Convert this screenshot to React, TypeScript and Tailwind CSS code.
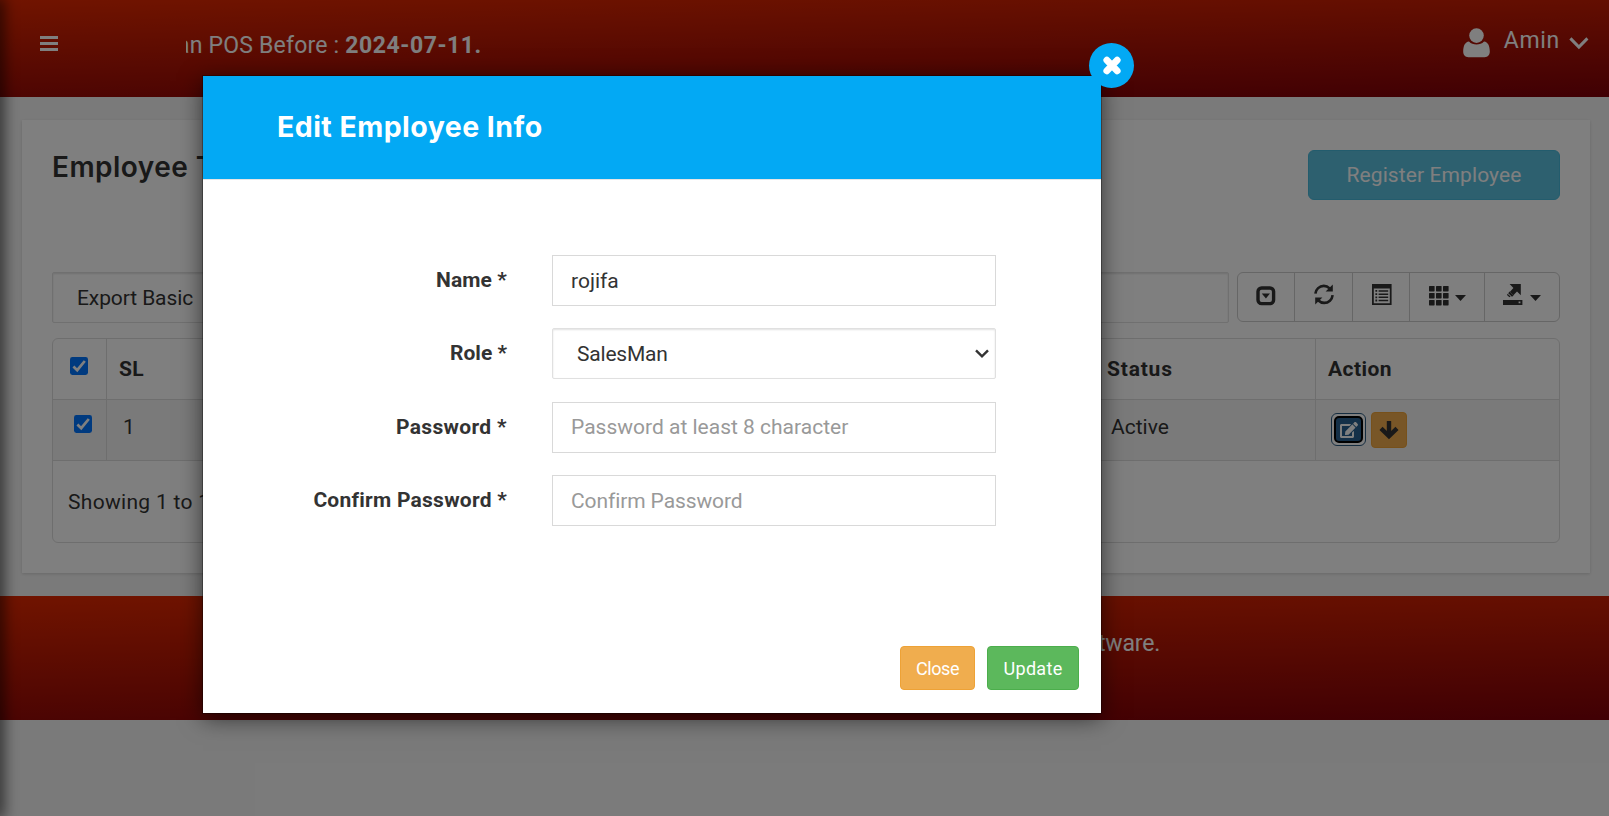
import type { ReactNode } from "react";
import { FaEdit } from "react-icons/fa";

const BRAND = "bg-[linear-gradient(178.6deg,#e22800_0%,#800008_100%)]";

function UserIcon() {
  return (
    <svg width="27" height="30" viewBox="0 0 27 30" fill="currentColor">
      <circle cx="13.5" cy="7.6" r="7.3" />
      <path d="M6 13.4C8 15.6 10.6 16.4 13.5 16.4S19 15.6 21 13.4C25 14 26.8 17.6 26.8 23.6 26.8 27 25 29.2 21.6 29.2H5.4C2 29.2.2 27 .2 23.6.2 17.6 2 14 6 13.4Z" />
    </svg>
  );
}

function PaginationIcon() {
  return (
    <svg width="20" height="20" viewBox="0 0 20 20">
      <rect x="2" y="2" width="15.6" height="15.6" rx="3.6" fill="none" stroke="currentColor" strokeWidth="3.4" />
      <path d="M5.8 7.4h8.2L9.9 12.4Z" fill="currentColor" />
    </svg>
  );
}

function RefreshIcon() {
  return (
    <svg width="20" height="21" viewBox="0 0 20 21" fill="none" stroke="currentColor" strokeWidth="2.6">
      <path d="M1.4 9.6C1.8 5.2 5.4 1.9 9.8 1.9c2.4 0 4.3.9 5.8 2.4" />
      <path d="M18.6 11.2c-.4 4.4-4 7.7-8.4 7.7-2.4 0-4.3-.9-5.8-2.4" />
      <path d="M18.8.4v7.2h-7.2Z" fill="currentColor" stroke="none" />
      <path d="M1.2 20.6v-7.2h7.2Z" fill="currentColor" stroke="none" />
    </svg>
  );
}

function ListIcon() {
  return (
    <svg width="20" height="21" viewBox="0 0 20 21" fill="currentColor">
      <path fillRule="evenodd" d="M0 0h19.6v21H0ZM1.8 4.6v14.6h16V4.6Z" />
      <path d="M3.4 6h1.8v1.8H3.4zM6.6 6.2h9.6v1.5H6.6zM3.4 9.2h1.8V11H3.4zM6.6 9.4h9.6v1.5H6.6zM3.4 12.4h1.8v1.8H3.4zM6.6 12.6h9.6v1.5H6.6zM3.4 15.6h1.8v1.8H3.4zM6.6 15.8h9.6v1.5H6.6z" />
    </svg>
  );
}

function GridIcon() {
  return (
    <svg width="20" height="20" viewBox="0 0 20 20" fill="currentColor">
      {[0, 7, 14].map((y) => [0, 7, 14].map((x) => <rect key={`${x}-${y}`} x={x} y={y} width="5.6" height="5.4" rx=".6" />))}
    </svg>
  );
}

function ExportIcon() {
  return (
    <svg width="20" height="21" viewBox="0 0 20 21" fill="currentColor">
      <path d="M6.6 0h11.2v11.2L14 7.6 10.4 11.2 7 7.8 10.4 3.9Z" />
      <path d="M6.6 7.6 10.6 11.4 9 12.8 5.2 9.2ZM4.6 9.8 7.6 12.6 6.4 13.2 4 11Z" />
      <path fillRule="evenodd" d="M0 16h19.4v5H0ZM15.6 17.6v1.6h1.8v-1.6Z" />
    </svg>
  );
}

function Caret() {
  return (
    <svg width="11" height="6" viewBox="0 0 11 6" fill="currentColor">
      <path d="M0 0h11L5.5 6Z" />
    </svg>
  );
}

function CheckedBox() {
  return (
    <svg width="18" height="18" viewBox="0 0 18 18">
      <rect width="18" height="18" rx="2.4" fill="#0075ff" />
      <path d="M3.4 9.6 7.2 13.2 14.8 4" fill="none" stroke="#fff" strokeWidth="2.7" />
    </svg>
  );
}

function ToolButton({ className, children }: { className: string; children: ReactNode }) {
  return <button className={`flex justify-center border-r border-[#ccc] last:border-r-0 ${className}`}>{children}</button>;
}

function Field({ label, tracking, children }: { label: string; tracking: string; children: ReactNode }) {
  return (
    <div className="flex h-[51px]">
      <label className={`w-[304px] text-right leading-[51px] font-bold ${tracking}`}>{label}</label>
      <div className="ml-[45px] w-[444px]">{children}</div>
    </div>
  );
}

const inputClass =
  "block h-[51px] w-full border border-[#d9d9d9] bg-white pl-[18px] text-[21px] text-[#333] outline-none placeholder:text-[#999]";

export default function App() {
  return (
    <div className="relative h-[816px] w-[1609px] overflow-hidden bg-[#f5f5f5] font-['Roboto',sans-serif] text-[21px] text-[#333]">
      <header className={`flex h-[97px] text-white ${BRAND}`}>
        <button className="mt-9 ml-10 flex h-[15px] w-[18px] flex-col justify-between">
          <span className="h-[3px] w-full bg-white" />
          <span className="h-[3px] w-full bg-white" />
          <span className="h-[3px] w-full bg-white" />
        </button>
        <div className="mt-[30px] ml-[128px] flex h-8 w-[900px] overflow-hidden text-[23px] leading-8 whitespace-nowrap">
          <span className="-ml-[9px] tracking-[0.2px]">an POS Before :</span>
          <span className="ml-[6px] font-bold tracking-[0.55px]">2024-07-11.</span>
        </div>
        <div className="mr-5 ml-auto flex">
          <span className="mt-[27.5px]">
            <UserIcon />
          </span>
          <span className="mt-[25px] ml-[14px] text-[23px] leading-8 tracking-[0.7px]">Amin</span>
          <svg className="mt-9 ml-[9px]" width="20" height="14" viewBox="0 0 20 14" fill="none" stroke="currentColor" strokeWidth="3">
            <path d="M1.4 2.4 9.9 11 18.4 2.4" />
          </svg>
        </div>
      </header>

      <main className="pt-[23px] pr-[19px] pb-[23px] pl-[22px]">
        <section className="h-[453px] bg-white px-[30px] pt-[30px] shadow-[0_1px_3px_rgba(0,0,0,0.15)]">
          <div className="flex h-[122px] justify-between">
            <h1 className="mt-[1px] h-8 font-['Inter',sans-serif] text-[28px] leading-8 font-semibold tracking-[0.45px]">Employee T</h1>
            <button className="h-[50px] w-[252px] rounded-[6px] border border-[#46b8da] bg-[#5bc0de] pt-[2px] tracking-[0.1px] text-white">Register Employee</button>
          </div>

          <div className="flex">
            <div className="h-[51px] w-[1177px] rounded-[2px] border border-[#e0e0e0] pl-6 leading-[51px] tracking-[-0.1px] shadow-[inset_0_1px_2px_rgba(0,0,0,0.12)]">
              Export Basic
            </div>
            <div className="ml-2 flex h-[50px] w-[323px] rounded-[6px] border border-[#ccc]">
              <ToolButton className="w-[57px] pt-[13px]"><PaginationIcon /></ToolButton>
              <ToolButton className="w-[58px] pt-[11px]"><RefreshIcon /></ToolButton>
              <ToolButton className="w-[57px] pt-[11px] pl-[2px]"><ListIcon /></ToolButton>
              <ToolButton className="w-[75px] gap-[6px] pt-[13px]">
                <GridIcon />
                <span className="mt-[9px]"><Caret /></span>
              </ToolButton>
              <ToolButton className="w-[74px] gap-[7px] pt-[11px]">
                <ExportIcon />
                <span className="mt-[11px]"><Caret /></span>
              </ToolButton>
            </div>
          </div>

          <div className="mt-[15px] h-[205px] overflow-hidden rounded-[6px] border border-[#ddd]">
            <div className="flex h-[61px] border-b border-[#ddd] leading-[61px] font-bold">
              <div className="w-[54px] border-r border-[#ddd] pt-[17.5px] pl-[17px]"><CheckedBox /></div>
              <div className="w-[988px] pl-3 tracking-[0.4px]">SL</div>
              <div className="w-[221px] border-r border-[#ddd] pl-3 tracking-[0.8px]">Status</div>
              <div className="pl-[12px] tracking-[0.45px]">Action</div>
            </div>
            <div className="flex h-[61px] border-b border-[#ddd] bg-[#f5f5f5] leading-[55px]">
              <div className="w-[54px] border-r border-[#ddd] pt-[14.5px] pl-[21px]"><CheckedBox /></div>
              <div className="w-[988px] pl-4">1</div>
              <div className="w-[221px] border-r border-[#ddd] pl-4">Active</div>
              <div className="flex items-start pl-[15px]">
                <button className="mt-[13px] flex h-[33px] w-[35px] rounded-[6px] border border-[#2b5a80] bg-white p-[2px]">
                  <span className="flex h-full w-full items-center justify-center rounded-[5px] border-[2.5px] border-black bg-[#286090] pl-[1px] text-white">
                    <FaEdit size={18} />
                  </span>
                </button>
                <button className="mt-[12px] ml-[5px] flex h-9 w-9 items-center justify-center rounded-[4px] border border-[#eea236] bg-[#f0ad4e] text-[#333]">
                  <svg width="20" height="19" viewBox="0 0 20 19" fill="none" stroke="currentColor" strokeWidth="4.4">
                    <path d="M10 .8V14" strokeLinecap="round" />
                    <path d="M2 7.4 10 15.2 18 7.4" />
                  </svg>
                </button>
              </div>
            </div>
            <div className="h-[82px] pl-[15px] leading-[82px] tracking-[0.3px] whitespace-nowrap">Showing 1 to 1</div>
          </div>
        </section>
      </main>

      <footer className={`h-[124px] pt-8 text-white ${BRAND}`}>
        <p className="w-[1160px] text-right text-[23px] leading-8 tracking-[-0.2px]">tware.</p>
      </footer>

      <div className="absolute top-0 -left-2 h-full w-2 shadow-[0_0_15px_3px_rgba(0,0,0,0.7)]" />
      <div className="absolute inset-0 bg-black/50" />

      <div role="dialog" className="absolute top-[76px] left-[203px] h-[637px] w-[898px] bg-white shadow-[0_5px_22px_rgba(0,0,0,0.6),0_0_0_1px_rgba(0,0,0,0.3)]">
        <div className="h-[104px] border-b border-[#e5e5e5] bg-[#03a9f4] pl-[74px]">
          <h2 className="font-['Inter',sans-serif] text-[28.5px] leading-[102px] font-bold tracking-[0.45px] text-white">Edit Employee Info</h2>
        </div>
        <button className="absolute -top-[33px] left-[886px] flex h-[45px] w-[45px] items-center justify-center rounded-full bg-[#03a9f4] text-white">
          <svg width="18" height="19" viewBox="0 0 18 19" fill="none" stroke="currentColor" strokeWidth="6.8" strokeLinecap="round">
            <path d="M3.8 4.1 14.2 14.9M14.2 4.1 3.8 14.9" />
          </svg>
        </button>
        <form className="flex flex-col gap-[22.4px] pt-[75px]">
          <Field label="Name *" tracking="tracking-[0.1px]">
            <input className={inputClass} defaultValue="rojifa" />
          </Field>
          <Field label="Role *" tracking="tracking-normal">
            <div className="flex h-[51px] items-center justify-between rounded-[2px] border border-[#e0e0e0] pr-[6px] pl-6 tracking-[-0.2px] shadow-[inset_0_1px_2px_rgba(0,0,0,0.12)]">
              <span className="pt-[2px]">SalesMan</span>
              <svg width="14" height="10" viewBox="0 0 14 10" fill="none" stroke="#333" strokeWidth="2.4">
                <path d="M1 1.4 7 7.4 13 1.4" />
              </svg>
            </div>
          </Field>
          <Field label="Password *" tracking="tracking-[0.35px]">
            <input className={inputClass} placeholder="Password at least 8 character" />
          </Field>
          <Field label="Confirm Password *" tracking="tracking-[0.25px]">
            <input className={`${inputClass} tracking-[-0.1px]`} placeholder="Confirm Password" />
          </Field>
        </form>
        <div className="mt-[120px] flex justify-end gap-3 pr-[22px] text-[18px] text-white">
          <button className="h-11 w-[75px] rounded-[4px] border border-[#eea236] bg-[#f0ad4e] tracking-[-0.4px]">Close</button>
          <button className="h-11 w-[92px] rounded-[4px] border border-[#4cae4c] bg-[#5cb85c] tracking-[0.3px]">Update</button>
        </div>
      </div>
    </div>
  );
}
